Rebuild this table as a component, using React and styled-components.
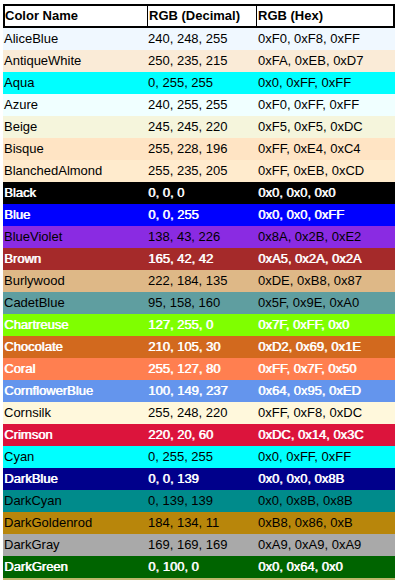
import React from 'react';
import styled, { createGlobalStyle } from 'styled-components';

const colors = [
  ['AliceBlue', 240, 248, 255],
  ['AntiqueWhite', 250, 235, 215],
  ['Aqua', 0, 255, 255],
  ['Azure', 240, 255, 255],
  ['Beige', 245, 245, 220],
  ['Bisque', 255, 228, 196],
  ['BlanchedAlmond', 255, 235, 205],
  ['Black', 0, 0, 0, true],
  ['Blue', 0, 0, 255, true],
  ['BlueViolet', 138, 43, 226],
  ['Brown', 165, 42, 42, true],
  ['Burlywood', 222, 184, 135],
  ['CadetBlue', 95, 158, 160],
  ['Chartreuse', 127, 255, 0, true],
  ['Chocolate', 210, 105, 30, true],
  ['Coral', 255, 127, 80, true],
  ['CornflowerBlue', 100, 149, 237, true],
  ['Cornsilk', 255, 248, 220],
  ['Crimson', 220, 20, 60, true],
  ['Cyan', 0, 255, 255],
  ['DarkBlue', 0, 0, 139, true],
  ['DarkCyan', 0, 139, 139],
  ['DarkGoldenrod', 184, 134, 11],
  ['DarkGray', 169, 169, 169],
  ['DarkGreen', 0, 100, 0, true],
  ['DarkKhaki', 189, 183, 107],
];

const hex = n => '0x' + n.toString(16).toUpperCase();

const App = () => {
  return (
    <>
      <GlobalStyle />
      <Table>
        <HeaderRow>
          <HeadCell>Color Name</HeadCell>
          <HeadCell $sep>RGB (Decimal)</HeadCell>
          <HeadCell $sep>RGB (Hex)</HeadCell>
        </HeaderRow>
        {colors.map(([name, r, g, b, light]) => (
          <Row key={name} $bg={`rgb(${r}, ${g}, ${b})`} $light={light}>
            <Cell>{name}</Cell>
            <Cell>{`${r}, ${g}, ${b}`}</Cell>
            <Cell $last>{`${hex(r)}, ${hex(g)}, ${hex(b)}`}</Cell>
          </Row>
        ))}
      </Table>
    </>
  );
};
export default App;

const GlobalStyle = createGlobalStyle`
  body {
    margin: 0;
    background: #fff;
    font-family: 'Liberation Sans', Arial, sans-serif;
    font-size: 13px;
    color: #000;
  }
`;

const Table = styled.div`
  width: 392px;
  margin: 4px 0 0 3px;
  display: flex;
  flex-direction: column;
`;

const HeaderRow = styled.div`
  box-sizing: border-box;
  height: 24px;
  border: 2px solid #000;
  display: grid;
  grid-template-columns: 142px 109px 1fr;
  font-weight: bold;
`;

const HeadCell = styled.div`
  line-height: 20px;
  padding-left: ${props => (props.$sep ? '1px' : '0')};
  border-left: ${props => (props.$sep ? '1px solid #000' : 'none')};
  white-space: nowrap;
`;

const Row = styled.div`
  height: 22px;
  display: grid;
  grid-template-columns: 144px 109px 1fr;
  background: ${props => props.$bg};
  color: ${props => (props.$light ? '#fff' : '#000')};
  text-shadow: ${props => (props.$light ? '0.7px 0 0 #fff' : 'none')};
`;

const Cell = styled.div`
  line-height: 22px;
  padding-left: ${props => (props.$last ? '2px' : '1px')};
  white-space: nowrap;
`;
